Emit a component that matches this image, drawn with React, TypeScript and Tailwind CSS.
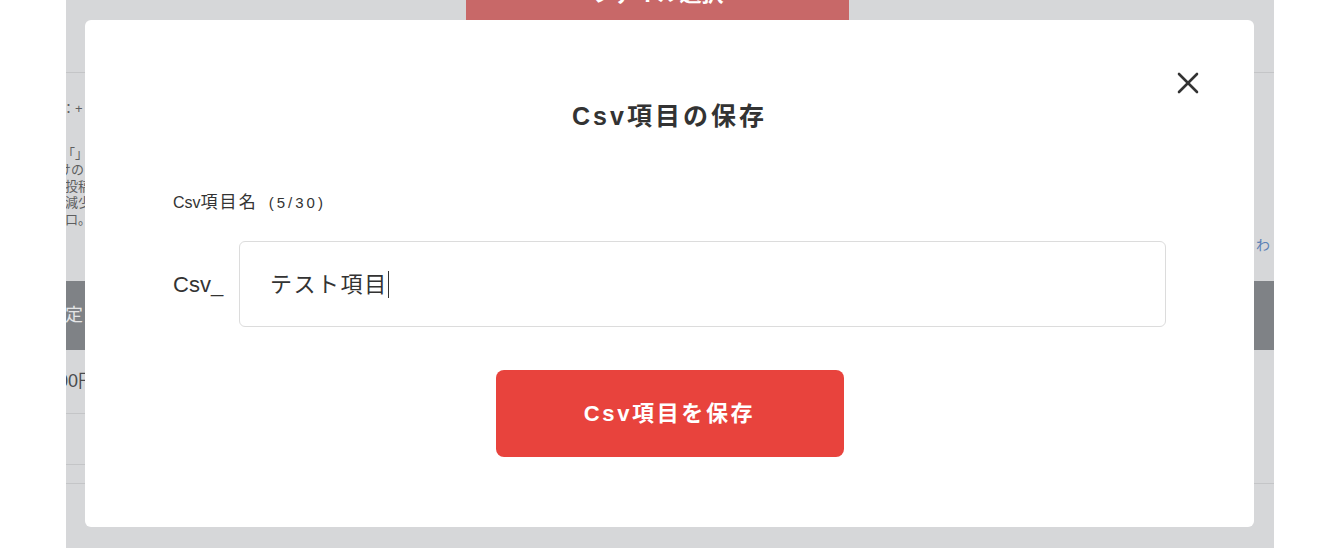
import React from 'react';

const font = { fontFamily: '"Liberation Sans", "Noto Sans CJK JP", sans-serif' };

const CloseIcon: React.FC = () => (
  <svg width="24" height="24" viewBox="0 0 24 24" fill="none" stroke="#333" strokeWidth="2.6" strokeLinecap="round">
    <line x1="3" y1="3" x2="21" y2="21" />
    <line x1="21" y1="3" x2="3" y2="21" />
  </svg>
);

const BackgroundPage: React.FC = () => (
  <div className="flex flex-col">
    {/* top action */}
    <div className="h-[73px] border-b border-[#c4c5c7]">
      <div className="ml-[400px] -mt-[37px] flex h-[60px] w-[383px] items-center justify-center bg-[#c86868] text-[22px] font-bold text-white">
        ファイル選択
      </div>
    </div>

    {/* description area */}
    <div className="flex h-[208px] justify-between text-[13px] leading-[16.5px] text-[#5d5e60]">
      <div className="pt-[28px]">
        <p className="-ml-[17px] whitespace-nowrap">象：+ 追加</p>
        <div className="mt-[28px] whitespace-nowrap">
          <p className="-ml-[4px]">「」を</p>
          <p className="-ml-[8px]">けの</p>
          <p className="-ml-[1px]">投稿</p>
          <p className="-ml-[1px]">減少</p>
          <p className="-ml-[1px]">口。</p>
        </div>
      </div>
      <div className="mr-[4px] pt-[164px] text-[14px] text-[#5a7fb5]">わ</div>
    </div>

    {/* table header */}
    <div className="flex h-[69px] items-center bg-[#7f8286] text-[18px] text-[#e4e5e6]">
      <span className="-ml-[19px] whitespace-nowrap">設定</span>
    </div>

    {/* table rows */}
    <div className="flex h-[64px] w-[600px] items-center border-b border-[#c4c5c7] text-[18px] text-[#4a4b4d]">
      <span className="-ml-[8px] whitespace-nowrap">00円</span>
    </div>
    <div className="h-[51px] w-[600px] border-b border-[#c4c5c7]" />
    <div className="h-[19px] border-b border-[#c4c5c7]" />
  </div>
);

const SaveCsvModal: React.FC = () => (
  <div className="absolute left-[19px] top-[20px] flex h-[507px] w-[1169px] flex-col rounded-md bg-white px-[88px] pt-[80px] text-[#333]">
    <button className="absolute right-[54px] top-[51px]">
      <CloseIcon />
    </button>

    <h3 className="text-center text-[25px] font-bold leading-[32px] tracking-[0.12em]">Csv項目の保存</h3>

    <div className="mt-[61px] flex items-baseline text-[15px] leading-[20px]">
      <span className="text-[16px]">Csv</span>
      <span className="text-[17px] tracking-[0.12em]">項目名</span>
      <span className="ml-[11px] tracking-[0.2em]">(5/30)</span>
    </div>

    <div className="mt-[28px] flex items-center">
      <span className="w-[66px] text-[22px]">Csv_</span>
      <div className="flex h-[86px] flex-1 items-center rounded-md border border-[#dcdcdc] pl-[30px] text-[22px] tracking-[0.07em]">
        <span>テスト項目</span>
        <span className="inline-block h-[27px] w-[1.5px] bg-[#333]" />
      </div>
    </div>

    <div className="mt-[43px] flex justify-center">
      <button className="h-[87px] w-[348px] rounded-lg bg-[#e8433d] text-[22px] font-bold tracking-[0.12em] text-white">
        Csv項目を保存
      </button>
    </div>
  </div>
);

export default function App() {
  return (
    <div className="flex h-[548px] w-[1340px] bg-white" style={font}>
      <div className="w-[66px]" />
      <div className="relative h-full w-[1208px] overflow-hidden bg-[#d6d7d9]">
        <BackgroundPage />
        <SaveCsvModal />
      </div>
      <div className="w-[66px]" />
    </div>
  );
}
